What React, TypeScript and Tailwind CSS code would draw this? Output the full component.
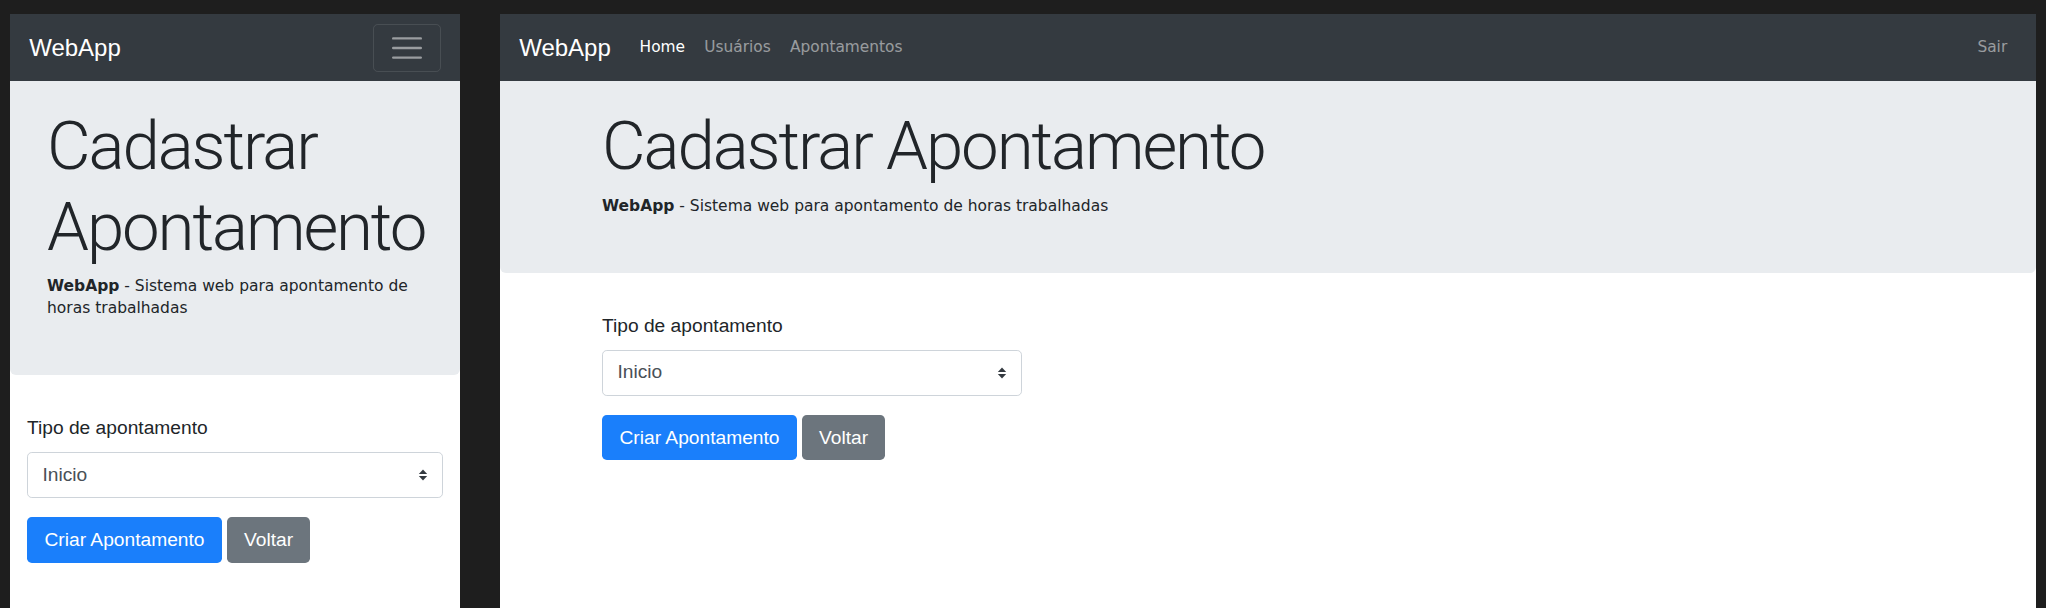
import React from "react";

const SF = "font-['Liberation_Sans','Arial',sans-serif]";
const DV = "font-['DejaVu_Sans','Verdana',sans-serif]";
const H1F = "font-['Roboto','Liberation_Sans',sans-serif]";

function SelectArrows() {
  return (
    <svg width="10" height="12" viewBox="0 0 10 12" className="shrink-0">
      <path d="M5 0.5 L9.2 5 L0.8 5 Z" fill="#343a40" />
      <path d="M5 11.5 L9.2 7 L0.8 7 Z" fill="#343a40" />
    </svg>
  );
}

function Form({ narrow }: { narrow?: boolean }) {
  return (
    <div className={SF}>
      <label className="block text-[19.2px] leading-[1.5] text-[#212529] mb-[9.6px]">Tipo de apontamento</label>
      <div
        className={`flex items-center justify-between h-[45.6px] border border-[#ced4da] rounded-[4.8px] pl-[14.4px] pr-[14px] text-[19.2px] text-[#495057] bg-white ${
          narrow ? "w-full" : "w-[420px]"
        }`}
      >
        <span>Inicio</span>
        <SelectArrows />
      </div>
      <div className="flex gap-[5.5px] mt-[19.2px]">
        <button className="h-[45.6px] px-[17.5px] rounded-[4.8px] bg-[#1a7ffb] text-white text-[19.2px] leading-none">
          Criar Apontamento
        </button>
        <button className="h-[45.6px] px-[16.5px] rounded-[4.8px] bg-[#6c757d] text-white text-[19.2px] leading-none">
          Voltar
        </button>
      </div>
    </div>
  );
}

function Jumbo({ pad }: { pad: string }) {
  return (
    <div className={`bg-[#e9ecef] rounded-b-[6px] pt-[25px] pb-[36.8px] ${pad}`}>
      <h1 className={`${H1F} text-[67.2px] leading-[1.2] font-light tracking-[-2.1px] text-[#212529] mb-[9px]`}>
        Cadastrar Apontamento
      </h1>
      <p className={`${DV} text-[15.5px] leading-[21.6px] text-[#212529] mb-[19.2px]`}>
        <b>WebApp</b> - Sistema web para apontamento de horas trabalhadas
      </p>
    </div>
  );
}

export default function App() {
  return (
    <div className="flex h-[608px] w-[2046px] bg-[#1e1e1e] pt-[14px] px-[10px] gap-[40px] overflow-hidden">
      {/* Mobile view */}
      <div className="w-[450px] shrink-0 bg-white flex flex-col">
        <nav className="h-[67px] bg-[#343a40] flex items-center justify-between pl-[19.2px] pr-[19px]">
          <span className={`${SF} text-[24px] text-white`}>WebApp</span>
          <button className="w-[68px] h-[48px] border border-[rgba(255,255,255,0.1)] rounded-[4.8px] flex items-center justify-center">
            <svg width="36" height="36" viewBox="0 0 30 30">
              <path
                d="M3.5 7h23M3.5 15h23M3.5 23h23"
                stroke="rgba(255,255,255,0.5)"
                strokeWidth="2"
                strokeLinecap="round"
              />
            </svg>
          </button>
        </nav>
        <Jumbo pad="px-[37px]" />
        <div className="mt-[38.4px] px-[17px]">
          <Form narrow />
        </div>
      </div>

      {/* Desktop view */}
      <div className="flex-1 bg-white flex flex-col">
        <nav className="h-[67px] bg-[#343a40] flex items-center px-[19.2px]">
          <span className={`${SF} text-[24px] text-white mr-[19.2px]`}>WebApp</span>
          <div className={`${DV} flex text-[15.4px]`}>
            <span className="px-[9.6px] text-white">Home</span>
            <span className="px-[9.6px] text-[rgba(255,255,255,0.5)]">Usuários</span>
            <span className="px-[9.6px] text-[rgba(255,255,255,0.5)]">Apontamentos</span>
          </div>
          <span className={`${DV} ml-auto px-[9.6px] text-[15.4px] text-[rgba(255,255,255,0.5)]`}>Sair</span>
        </nav>
        <Jumbo pad="px-[102px]" />
        <div className="mt-[38.4px] px-[102px]">
          <Form />
        </div>
      </div>
    </div>
  );
}
